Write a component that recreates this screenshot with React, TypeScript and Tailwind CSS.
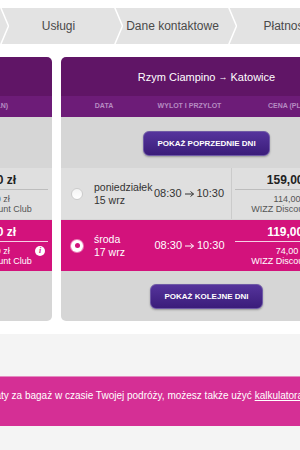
import React from "react";

function Chevron() {
  return (
    <svg width="9" height="36" viewBox="0 0 9 36" className="shrink-0 block">
      <polyline points="0.5,-1 8.5,18 0.5,37" fill="none" stroke="#ffffff" strokeWidth="1.5" />
    </svg>
  );
}

function Step({ label }: { label: string }) {
  return (
    <div className="flex shrink-0 w-[114px] h-full">
      <Chevron />
      <div className="flex-1 flex items-center justify-center pr-[6px] text-[12px] text-[#4a4a4a] whitespace-nowrap">
        {label}
      </div>
    </div>
  );
}

function Arrow() {
  return (
    <svg width="9" height="6" viewBox="0 0 9 6" className="mx-[3px] inline-block">
      <line x1="0" y1="3" x2="8.5" y2="3" stroke="currentColor" strokeWidth="1" />
      <polyline points="5.5,0.5 8.5,3 5.5,5.5" fill="none" stroke="currentColor" strokeWidth="1" />
    </svg>
  );
}

type RowData = {
  day: string;
  date: string;
  dep: string;
  arr: string;
  price: string;
  disc: string;
};

function Radio({ selected }: { selected: boolean }) {
  if (selected) {
    return (
      <div className="w-[12px] h-[12px] rounded-full bg-white flex items-center justify-center shrink-0 shadow-[0_0_0_1px_rgba(255,200,225,0.6)]">
        <div className="w-[5px] h-[5px] rounded-full bg-[#d3127c]" />
      </div>
    );
  }
  return (
    <div className="w-[12px] h-[12px] rounded-full bg-gradient-to-b from-[#f4f4f4] to-white border border-[#cccccc] shrink-0" />
  );
}

function Row({ row, selected }: { row: RowData; selected: boolean }) {
  const bg = selected ? "bg-[#d3127c]" : "bg-[#dfdfdf]";
  const txt = selected ? "text-white" : "text-[#333333]";
  return (
    <div className={`relative grid grid-cols-[86px_85px_1fr] h-[51px] ${bg}`}>
      <div className="flex items-center">
        <div className="ml-[10px]">
          <Radio selected={selected} />
        </div>
        <div className={`ml-[11px] text-[10.5px] leading-[13px] ${txt}`}>
          <div>{row.day}</div>
          <div>{row.date}</div>
        </div>
      </div>
      <div
        className={`flex items-center justify-center text-[11px] ${txt} ${
          selected ? "" : "border-r border-[#cbcbcb]"
        }`}
      >
        <span>{row.dep}</span>
        <Arrow />
        <span>{row.arr}</span>
      </div>
      <div className="flex flex-col items-center pt-[6px] pl-[3px] pr-[4px]">
        <div className={`text-[12px] leading-[12px] font-bold whitespace-nowrap ${selected ? "text-white" : "text-[#222222]"}`}>
          {row.price}
        </div>
        <div className={`w-full h-px mt-[3px] ${selected ? "bg-white/80" : "bg-[#bdbdbd]"}`} />
        <div className={`mt-[4px] text-[9px] leading-[10px] text-center whitespace-nowrap ${selected ? "text-white" : "text-[#555555]"}`}>
          <div>{row.disc}</div>
          <div>WIZZ Discount Club</div>
        </div>
      </div>
      {selected && (
        <div className="absolute right-[7px] top-[26px] w-[10px] h-[10px] rounded-full bg-white flex items-center justify-center text-[8px] leading-none font-bold text-[#d3127c] font-['Liberation_Serif',serif] italic">
          i
        </div>
      )}
    </div>
  );
}

function PurpleButton({ label }: { label: string }) {
  return (
    <div className="self-center h-[25px] px-[13px] rounded-[6px] border border-[#6f5aa6] bg-gradient-to-b from-[#55349c] to-[#3b1c7a] shadow-[0_1px_2px_rgba(0,0,0,0.3)] flex items-center text-white text-[8px] font-bold whitespace-nowrap">
      {label}
    </div>
  );
}

function Card({ from, to, rows }: { from: string; to: string; rows: RowData[] }) {
  return (
    <div className="w-[291px] shrink-0 rounded-[5px] overflow-hidden">
      <div className="h-[39px] bg-[#601566] flex items-center justify-center pt-[2px] text-white text-[11px] whitespace-nowrap">
        <span>{from}</span>
        <span className="text-[9px] mx-[3px]">→</span>
        <span>{to}</span>
      </div>
      <div className="h-[21px] bg-[#6d1c78] grid grid-cols-[86px_85px_1fr] items-center text-[7px] font-bold text-[#b68bc2] uppercase">
        <div className="text-center">Data</div>
        <div className="text-center">Wylot i przylot</div>
        <div className="text-center pr-[8px]">Cena (PLN)</div>
      </div>
      <div className="bg-[#d6d6d6] pt-[14px] pb-[12px] flex flex-col">
        <PurpleButton label="POKAŻ POPRZEDNIE DNI" />
        <div className="mt-[12px] flex flex-col gap-px">
          <Row row={rows[0]} selected={false} />
          <Row row={rows[1]} selected={true} />
        </div>
        <div className="mt-[13px] flex flex-col">
          <PurpleButton label="POKAŻ KOLEJNE DNI" />
        </div>
      </div>
    </div>
  );
}

export default function App() {
  const outbound: RowData[] = [
    { day: "czwartek", date: "11 wrz", dep: "06:05", arr: "08:05", price: "149,00 zł", disc: "104,00 zł" },
    { day: "sobota", date: "13 wrz", dep: "06:05", arr: "08:05", price: "129,00 zł", disc: "104,00 zł" },
  ];
  const inbound: RowData[] = [
    { day: "poniedziałek", date: "15 wrz", dep: "08:30", arr: "10:30", price: "159,00 zł", disc: "114,00 zł" },
    { day: "środa", date: "17 wrz", dep: "08:30", arr: "10:30", price: "119,00 zł", disc: "74,00 zł" },
  ];
  return (
    <div className="w-[300px] h-[450px] overflow-hidden bg-white font-['Liberation_Sans',Arial,sans-serif]">
      <div className="pt-[8px]">
        <div className="h-[36px] bg-[#e3e3e3] flex ml-[-114px]">
          <Step label="Lot" />
          <Step label="Usługi" />
          <Step label="Dane kontaktowe" />
          <Step label="Płatność" />
        </div>
      </div>
      <div className="mt-[13px] flex gap-[9px] ml-[-239px]">
        <Card from="Katowice" to="Rzym Ciampino" rows={outbound} />
        <Card from="Rzym Ciampino" to="Katowice" rows={inbound} />
      </div>
      <div className="mt-[13px] bg-[#f4f4f4] pt-[42px] h-[200px]">
        <div className="h-[50px] bg-[#d52f95] border-t border-[#e38cc0] pt-[12px] overflow-hidden">
          <div className="flex ml-[-299px] whitespace-nowrap text-[10px] leading-[14px] text-white">
            <span className="w-[300px] shrink-0 text-right">Jeśli chcesz sprawdzić opła</span>
            <span>
              ty za bagaż w czasie Twojej podróży, możesz także użyć{" "}
              <span className="underline">kalkulatora bagażowego</span>.
            </span>
          </div>
        </div>
      </div>
    </div>
  );
}
